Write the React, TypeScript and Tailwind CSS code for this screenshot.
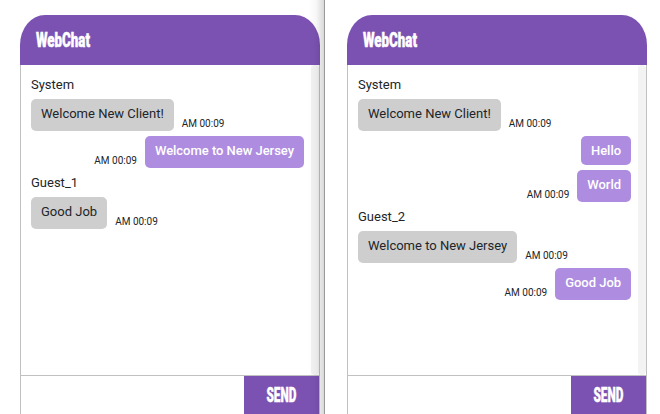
type Entry = { name?: string; text: string; mine?: boolean; time?: string };

const guestOne: Entry[] = [
  { name: "System", text: "Welcome New Client!", time: "AM 00:09" },
  { text: "Welcome to New Jersey", mine: true, time: "AM 00:09" },
  { name: "Guest_1", text: "Good Job", time: "AM 00:09" },
];

const guestTwo: Entry[] = [
  { name: "System", text: "Welcome New Client!", time: "AM 00:09" },
  { text: "Hello", mine: true },
  { text: "World", mine: true, time: "AM 00:09" },
  { name: "Guest_2", text: "Welcome to New Jersey", time: "AM 00:09" },
  { text: "Good Job", mine: true, time: "AM 00:09" },
];

function Message({ name, text, mine, time }: Entry) {
  return (
    <div className="mb-[5px]">
      {name && <div className="mb-[5px] h-[19px] leading-[19px]">{name}</div>}
      <div className={mine ? "flex flex-row-reverse gap-2" : "flex gap-2"}>
        <div
          className={`rounded-[5px] px-[10px] pt-[5px] leading-[19px] ${time ? "h-8" : "h-[29px]"} ${
            mine ? "bg-[#ae8de0] font-medium tracking-[-0.035px] text-white" : "bg-[#cecece]"
          }`}
        >
          {text}
        </div>
        {time && <div className="pt-[17px] text-[10px] leading-[15px]">{time}</div>}
      </div>
    </div>
  );
}

function Chat({ entries }: { entries: Entry[] }) {
  return (
    <section className="mt-[15px] flex h-[399px] w-[300px] flex-col">
      <header className="flex h-[50px] shrink-0 items-center bg-[#7b52b1] pl-4 [border-top-left-radius:25px_30px] [border-top-right-radius:25px_30px]">
        <h1 className="origin-left scale-x-[0.665] font-['Roboto'] text-[20px] leading-none font-black text-white [-webkit-text-stroke:0.5px_white]">
          WebChat
        </h1>
      </header>
      <div className="flex h-[310px] shrink-0 border-x border-[#c1c1c1]">
        <div className="flex-1 pt-[10px] pr-[7px] pl-[10px]">
          {entries.map((entry, i) => (
            <Message key={i} {...entry} />
          ))}
        </div>
        <div className="w-2 rounded-[4px] bg-[#f3f3f3]" />
      </div>
      <footer className="flex flex-1 justify-end border-x border-t border-[#c1c1c1]">
        <button className="flex w-[75px] items-center justify-center bg-[#7b52b1] font-['Roboto'] text-[20px] leading-none font-black text-white">
          <span className="scale-x-[0.59] [-webkit-text-stroke:0.5px_white]">SEND</span>
        </button>
      </footer>
    </section>
  );
}

export default function App() {
  return (
    <main className="flex h-[414px] w-[660px] overflow-hidden bg-white font-['Roboto',sans-serif] text-[13px] text-[#212529]">
      <div className="relative w-[325px] border-r border-[#999] pl-5">
        <Chat entries={guestOne} />
        <div className="absolute inset-y-0 right-0 w-4 bg-linear-to-r from-transparent via-black/3 to-black/15" />
      </div>
      <div className="pl-[22px]">
        <Chat entries={guestTwo} />
      </div>
    </main>
  );
}
